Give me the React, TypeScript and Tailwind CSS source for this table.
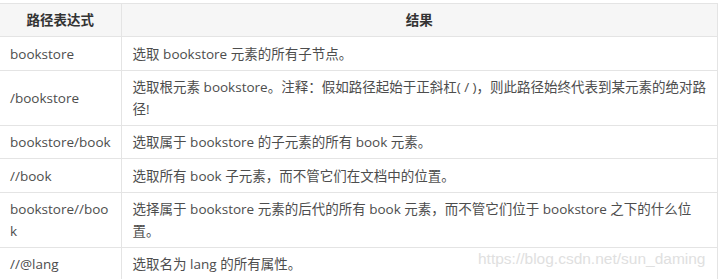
const rows: { path: React.ReactNode; result: React.ReactNode; h: string }[] = [
  { path: "bookstore", result: "选取 bookstore 元素的所有子节点。", h: "h-[34px]" },
  {
    path: "/bookstore",
    result: (
      <>
        选取根元素 bookstore。注释：假如路径起始于正斜杠( / )，则此路径始终代表到某元素的绝对路
        <br />
        径!
      </>
    ),
    h: "h-[55px]",
  },
  { path: "bookstore/book", result: "选取属于 bookstore 的子元素的所有 book 元素。", h: "h-[33px]" },
  { path: "//book", result: "选取所有 book 子元素，而不管它们在文档中的位置。", h: "h-[34px]" },
  {
    path: (
      <>
        bookstore//boo
        <br />k
      </>
    ),
    result: (
      <>
        选择属于 bookstore 元素的后代的所有 book 元素，而不管它们位于 bookstore 之下的什么位
        <br />
        置。
      </>
    ),
    h: "h-[55px]",
  },
  { path: "//@lang", result: "选取名为 lang 的所有属性。", h: "h-[33px]" },
]

export default function App() {
  return (
    <div className="relative w-[718px] h-[279px] overflow-hidden bg-white pt-[3px] font-['Open_Sans','Noto_Sans_CJK_SC',sans-serif] text-[13.5px] leading-[22px] text-[#4d4d4d]">
      <div className="flex">
        <table className="w-[715px] border-collapse">
          <thead>
            <tr className="h-[33px] bg-[#f6f6f6]">
              <th className="w-[122px] p-0 border-t border-r border-b border-[#e4e4e4] font-bold text-[#333]">路径表达式</th>
              <th className="p-0 border-t border-r border-b border-[#e4e4e4] font-bold text-[#333]">结果</th>
            </tr>
          </thead>
          <tbody>
            {rows.map((r, i) => (
              <tr key={i} className={r.h}>
                <td className="px-[10px] py-0 border-r border-b border-[#e4e4e4] align-middle whitespace-nowrap">{r.path}</td>
                <td className="px-[11px] py-0 border-r border-b border-[#e4e4e4] align-middle whitespace-nowrap">{r.result}</td>
              </tr>
            ))}
          </tbody>
        </table>
        <div className="ml-[1px] w-[2px] h-[279px] -mt-[3px] bg-[#9fd47a]" />
      </div>
      <div className="absolute left-[478px] top-[248px] font-['Liberation_Sans',sans-serif] text-[15.5px] leading-[22px] text-[#e0e0e0]">
        https://blog.csdn.net/sun_daming
      </div>
    </div>
  )
}
